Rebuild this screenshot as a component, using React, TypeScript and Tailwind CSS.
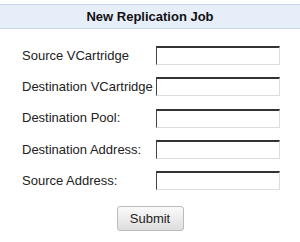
import React from "react";

const fields = [
  "Source VCartridge",
  "Destination VCartridge",
  "Destination Pool:",
  "Destination Address:",
  "Source Address:",
];

export default function App() {
  return (
    <div className="w-[300px] h-[242px] bg-white text-[#222] font-['Liberation_Sans',Arial,sans-serif]">
      <div className="mt-[4px] h-[25px] flex items-center justify-center bg-[#e6eefa] border-y border-[#c9d7ec] text-[13px] font-bold text-[#111]">
        New Replication Job
      </div>
      <div className="mt-[17px] pl-[22px] flex flex-col gap-[12.25px]">
        {fields.map((label) => (
          <div key={label} className="flex items-center h-[19px]">
            <span className="w-[134px] text-[13px] whitespace-nowrap">{label}</span>
            <input
              type="text"
              className="w-[124px] h-[19px] bg-white border-t-2 border-l border-r border-b border-t-[#333] border-l-[#444] border-r-[#ddd] border-b-[#ddd] outline-none"
            />
          </div>
        ))}
      </div>
      <div className="flex justify-center mt-[16px]">
        <button className="w-[67px] h-[25px] rounded-[3px] border border-[#bbb] bg-gradient-to-b from-[#fafafa] to-[#dedede] text-[13px] text-[#222]">
          Submit
        </button>
      </div>
    </div>
  );
}
